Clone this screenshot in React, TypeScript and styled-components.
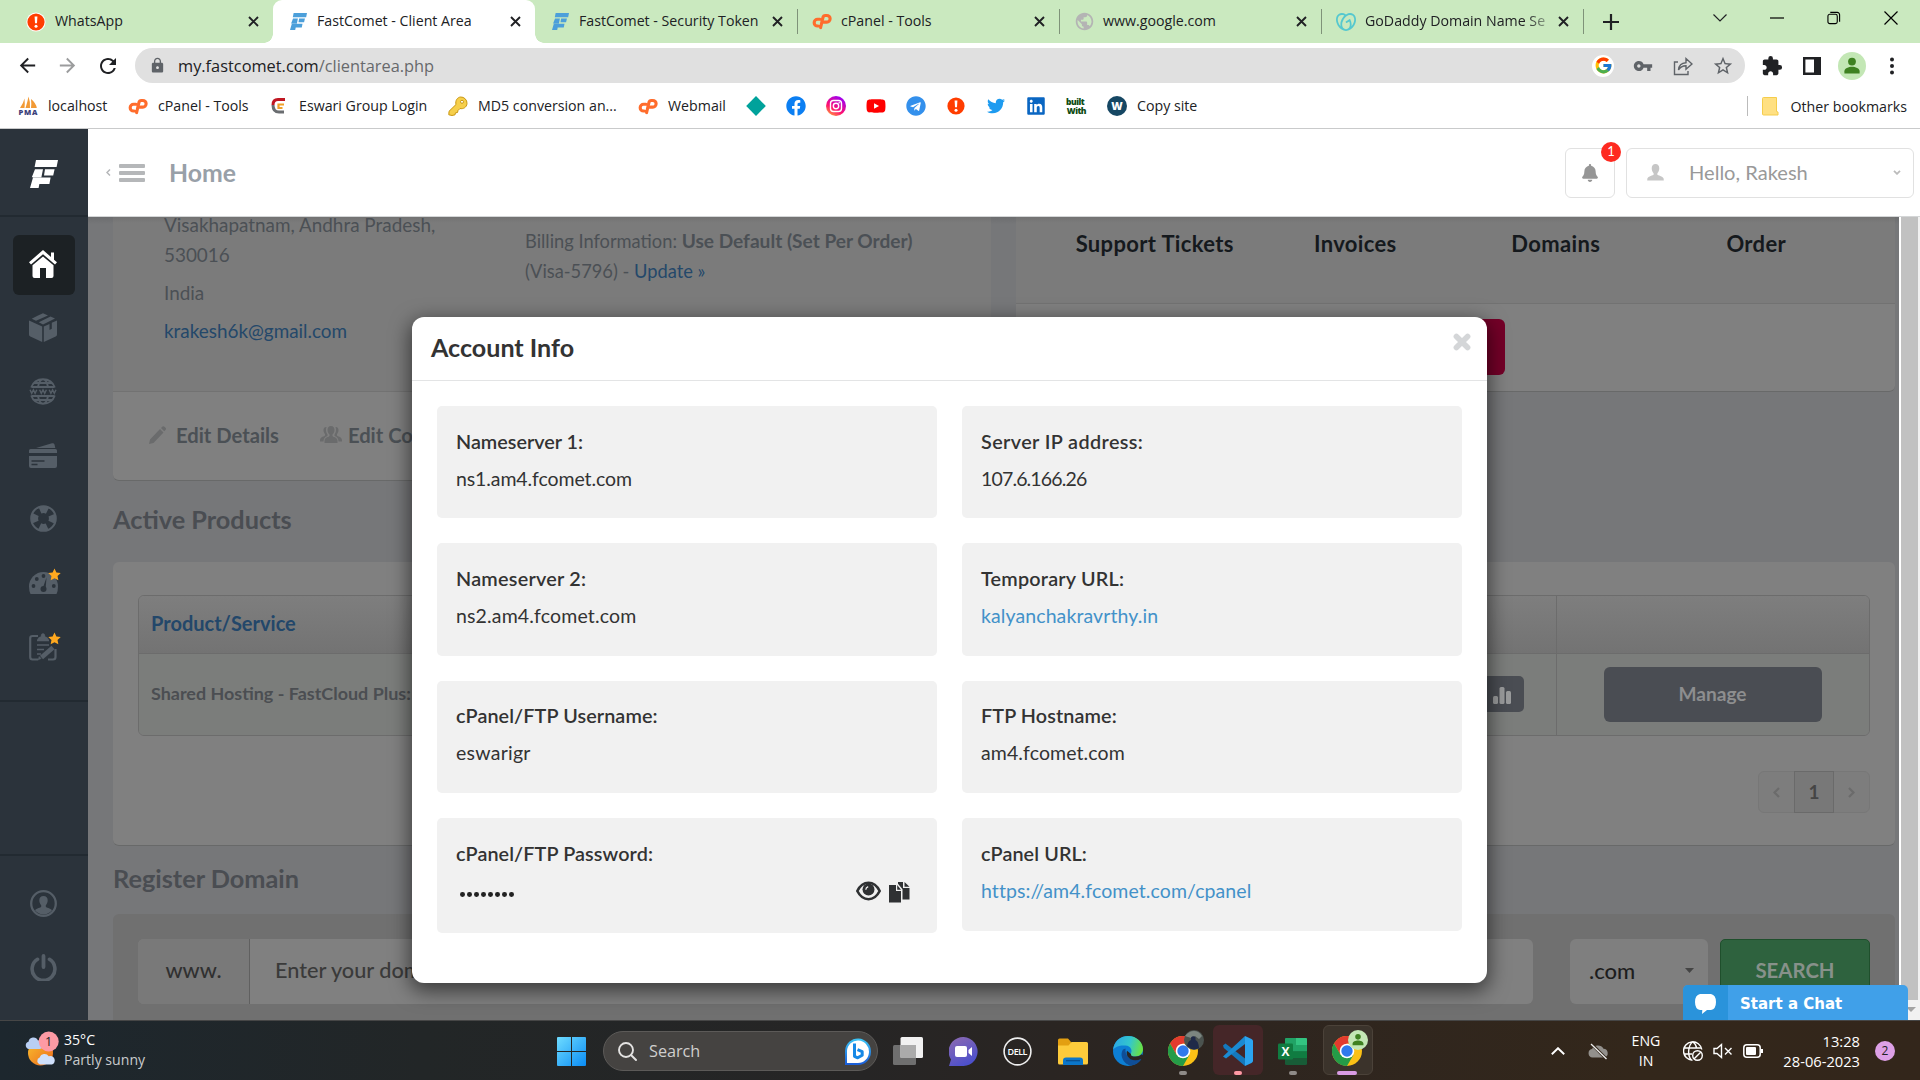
import React from "react";
import styled, { createGlobalStyle, css } from "styled-components";
import { MdArrowBack, MdArrowForward, MdRefresh, MdLock, MdVpnKey, MdStarBorder, MdExtension, MdPublic } from "react-icons/md";
import { FaBell, FaTwitter, FaLinkedin, FaYoutube, FaFacebook, FaTelegram } from "react-icons/fa";
import { FcGoogle } from "react-icons/fc";
import { SiGodaddy } from "react-icons/si";

const UI = `"Open Sans", "Noto Sans", sans-serif`;
const SITE = `Lato, "Open Sans", sans-serif`;

const Global = createGlobalStyle`
  *, *::before, *::after { box-sizing: border-box; }
  body { margin: 0; overflow: hidden; }
  p, h1, h2, h3 { margin: 0; }
  svg { display: block; flex: none; }
`;

const Screen = styled.div`
  width: 1920px;
  height: 1080px;
  overflow: hidden;
  display: flex;
  flex-direction: column;
  font-family: ${UI};
  font-size: 14.2px;
  color: #202124;
  white-space: nowrap;
`;

/* ---------- browser chrome ---------- */
const TabStrip = styled.div`
  height: 43px;
  flex: none;
  display: flex;
  align-items: center;
  padding-left: 11px;
  background: #cae9bf;
`;
const flare = css`
  content: "";
  position: absolute;
  bottom: 0;
  width: 9px;
  height: 9px;
`;
const Tab = styled.div<{ $active?: boolean; $divider?: boolean }>`
  position: relative;
  width: 262px;
  height: 43px;
  padding: 0 14px 0 15px;
  display: flex;
  align-items: center;
  border-radius: 9px 9px 0 0;
  background: ${(p) => (p.$active ? "#fff" : "transparent")};
  ${(p) =>
    p.$active &&
    css`
      &::before { ${flare} left: -9px; background: radial-gradient(circle at 0 0, transparent 8.5px, #fff 9px); }
      &::after { ${flare} right: -9px; background: radial-gradient(circle at 100% 0, transparent 8.5px, #fff 9px); }
    `}
  ${(p) =>
    p.$divider &&
    css`
      &::after { content: ""; position: absolute; right: -1px; top: 9px; width: 1px; height: 25px; background: #7f9279; }
    `}
`;
const IconSlot = styled.span`
  width: 20px;
  display: flex;
  justify-content: center;
  flex: none;
`;
const TabTitle = styled.span<{ $fade?: boolean }>`
  flex: 1;
  min-width: 0;
  margin-left: 9px;
  margin-right: 6px;
  line-height: 22px;
  padding-bottom: 2px;
  ${(p) => p.$fade && css`mask-image: linear-gradient(90deg, #000 86%, rgba(0, 0, 0, 0.3) 98%);`}
`;
const WindowButtons = styled.div`
  flex: 1;
  height: 36px;
  display: flex;
  align-items: center;
  align-self: flex-start;
  justify-content: flex-end;
  gap: 43px;
  padding-right: 22px;
`;
const NewTab = styled.div`
  width: 56px;
  display: flex;
  justify-content: center;
`;
const Toolbar = styled.div`
  height: 45px;
  flex: none;
  display: flex;
  align-items: center;
  padding: 0 8px 0 16px;
  background: #fff;
`;
const NavButtons = styled.div`
  display: flex;
  gap: 17px;
  width: 119px;
`;
const AddressBar = styled.div`
  width: 1610px;
  height: 35px;
  border-radius: 18px;
  background: #e0e0e0;
  display: flex;
  align-items: center;
  padding: 0 2px 0 14px;
`;
const Url = styled.span`
  flex: 1;
  margin-left: 12px;
  font-size: 16.35px;
  padding-top: 1px;
  span { color: #67696c; }
`;
const IconStrip = styled.div`
  display: grid;
  grid-template-columns: repeat(4, 40px);
  place-items: center;
`;
const AddressIcons = styled(IconStrip)`
  color: #5f6368;
`;
const ToolbarRight = styled(IconStrip)`
  margin-left: auto;
`;
const GoogleDisc = styled.span`
  width: 22px;
  height: 22px;
  border-radius: 50%;
  background: #fff;
  display: grid;
  place-items: center;
`;
const Bookmarks = styled.div`
  height: 41px;
  flex: none;
  display: flex;
  align-items: center;
  padding: 0 13px 4px 18px;
  background: #fff;
  border-bottom: 1px solid #c9cacb;
`;
const Bookmark = styled.div<{ $w: number }>`
  width: ${(p) => p.$w}px;
  display: flex;
  align-items: center;
  gap: 10px;
  line-height: 20px;
`;
const OtherBookmarks = styled.div`
  margin-left: auto;
  height: 20px;
  border-left: 1px solid #bbb;
  padding-left: 14px;
  display: flex;
  align-items: center;
  gap: 12px;
`;

/* ---------- site frame ---------- */
const Page = styled.div`
  position: relative;
  height: 891px;
  flex: none;
  display: flex;
  font-family: ${SITE};
`;
const Sidebar = styled.nav`
  width: 88px;
  background: #2b333b;
  color: #555e67;
  display: flex;
  flex-direction: column;
`;
const SideSection = styled.div<{ $h: number }>`
  height: ${(p) => p.$h}px;
  border-bottom: 2px solid #222a31;
  display: flex;
  flex-direction: column;
  align-items: center;
`;
const SideLogo = styled(SideSection)`
  justify-content: center;
  padding-top: 3px;
`;
const SideNav = styled(SideSection)`
  padding-top: 18px;
  gap: 3.7px;
`;
const SideUser = styled.div`
  padding-top: 18px;
  display: flex;
  flex-direction: column;
  align-items: center;
  gap: 4px;
`;
const SideItem = styled.div<{ $active?: boolean }>`
  width: 62px;
  height: 60px;
  border-radius: 6px;
  display: grid;
  place-items: center;
  position: relative;
  padding: 0 2px 2px 0;
  background: ${(p) => (p.$active ? "#1c2124" : "transparent")};
  color: ${(p) => (p.$active ? "#fff" : "inherit")};
`;
const StarBadge = styled.svg`
  position: absolute;
  left: 35px;
  top: 15px;
`;
const Main = styled.div`
  flex: 1;
  display: flex;
  flex-direction: column;
`;
const Header = styled.header`
  height: 88px;
  flex: none;
  display: flex;
  align-items: center;
  padding: 0 6px 0 18px;
  background: #fff;
  border-bottom: 1px solid #d4d6d7;
`;
const Burger = styled.div`
  width: 26px;
  margin-left: 8px;
  display: grid;
  gap: 3px;
  span { height: 4px; border-radius: 1px; background: #b5b7b9; }
`;
const PageName = styled.h1`
  margin-left: 24px;
  font-size: 24.8px;
  line-height: 30px;
  color: #98a0a8;
`;
const BellBox = styled.div`
  position: relative;
  margin-left: auto;
  width: 50px;
  height: 50px;
  border: 1px solid #e1e1e1;
  border-radius: 6px;
  display: grid;
  place-items: center;
  color: #969696;
`;
const Count = styled.span`
  position: absolute;
  right: -7px;
  top: -7px;
  width: 20px;
  height: 20px;
  border-radius: 50%;
  background: #fe2a20;
  color: #fff;
  font-size: 13px;
  line-height: 18px;
  text-align: center;
`;
const UserBox = styled.div`
  margin-left: 11px;
  width: 288px;
  height: 50px;
  border: 1px solid #e1e1e1;
  border-radius: 6px;
  display: flex;
  align-items: center;
  padding: 0 12px 0 20px;
  font-size: 20.1px;
  color: #999;
  span { margin-left: 25px; flex: 1; padding-bottom: 2px; }
`;
const Body = styled.div`
  height: 803px;
  flex: none;
  display: flex;
`;
const Content = styled.div`
  width: 1811px;
  height: 803px;
  overflow: hidden;
  padding: 0 4px 0 25px;
  background: linear-gradient(#6c6d6f, #767779 7px);
  color: #4b5055;
`;
const ScrollTrack = styled.div`
  width: 21px;
  background: #f1f1f1;
  border-left: 2px solid #fff;
  display: flex;
  flex-direction: column;
`;
const ScrollThumb = styled.div`
  width: 17px;
  height: 783px;
  background: #c1c1c1;
`;
const ScrollArrow = styled.div`
  width: 0;
  margin: 7px 0 0 5px;
  border: 5px solid transparent;
  border-top-color: #a3a3a3;
`;

/* ---------- dashboard ---------- */
const TopRow = styled.div`
  display: grid;
  grid-template-columns: 878px 879px;
  gap: 25px;
  height: 264px;
  align-items: start;
`;
const Card = styled.section<{ $h: number }>`
  height: ${(p) => p.$h}px;
  background: #808080;
  border-radius: 6px;
  border-bottom: 1px solid #686969;
  overflow: hidden;
`;
const FlatCard = styled(Card)`
  border-radius: 0 0 6px 6px;
`;
const Details = styled.div`
  height: 175px;
  overflow: hidden;
  display: grid;
  grid-template-columns: 361px 1fr;
  padding-left: 51px;
  background: linear-gradient(#727272, #7b7b7b 6px);
  border-bottom: 1px solid #727272;
  font-size: 18.9px;
  line-height: 30px;
  p { margin-bottom: 8px; }
  a { color: #24486a; }
`;
const Address = styled.div`
  margin-top: -7px;
`;
const Billing = styled.div`
  padding-top: 9px;
  font-size: 18.3px;
  b { font-size: 19.1px; }
`;
const CardActions = styled.div`
  height: 87px;
  padding: 0 0 2px 36px;
  display: flex;
  align-items: center;
  font-size: 20.2px;
  font-weight: 700;
`;
const Action = styled.div<{ $gap: number }>`
  display: flex;
  align-items: center;
  gap: ${(p) => p.$gap}px;
  margin-right: 41px;
  svg { color: #6a6b6c; }
`;
const Shortcuts = styled.div`
  height: 87px;
  display: grid;
  grid-template-columns: repeat(4, 200.5px);
  justify-content: center;
  text-align: center;
  padding-top: 12px;
  background: linear-gradient(#727272, #7b7b7b 6px);
  border-bottom: 1px solid #727272;
  font-size: 22px;
  font-weight: 700;
  letter-spacing: 0.35px;
  line-height: 30px;
  color: #15191d;
`;
const RedButton = styled.div`
  width: 200px;
  height: 56px;
  margin: 15px 0 0 289px;
  border-radius: 6px;
  background: #740028;
`;
const SectionTitle = styled.h2<{ $h: number }>`
  height: ${(p) => p.$h}px;
  line-height: ${(p) => p.$h - 4}px;
  font-size: 25.3px;
  color: #4a4d52;
`;
const ProductsCard = styled(Card)`
  padding: 33px 25px 0;
`;
const Table = styled.div`
  height: 141px;
  border: 1px solid #6c6c6c;
  border-radius: 6px;
  overflow: hidden;
`;
const TableRow = styled.div<{ $head?: boolean }>`
  height: ${(p) => (p.$head ? 58 : 81)}px;
  display: grid;
  grid-template-columns: 1418px 1fr;
  background: ${(p) => (p.$head ? "linear-gradient(#7e7e7e, #737373)" : "#7b7d7b")};
  border-bottom: ${(p) => (p.$head ? "1px solid #6c6c6c" : "0")};
  font-weight: 700;
`;
const Cell = styled.div<{ $link?: boolean }>`
  display: flex;
  align-items: center;
  justify-content: space-between;
  padding: 0 32px 3px 12px;
  border-right: 1px solid #6c6c6c;
  font-size: ${(p) => (p.$link ? 20 : 17.95)}px;
  color: ${(p) => (p.$link ? "#23476a" : "#4b4e52")};
  &:last-child { border-right: 0; padding: 0; justify-content: center; }
`;
const StatsButton = styled.div`
  width: 44px;
  height: 36px;
  margin-top: 2px;
  border-radius: 5px;
  background: #4a4d53;
  display: grid;
  place-items: center;
  padding-top: 2px;
`;
const ManageButton = styled.div`
  width: 218px;
  height: 55px;
  border-radius: 6px;
  background: #4a4d53;
  color: #8d8e8f;
  font-size: 19.1px;
  line-height: 53px;
  text-align: center;
  margin-right: 1px;
`;
const Pager = styled.div`
  margin: 35px 0 0 auto;
  width: 112px;
  height: 42px;
  border: 1px solid #777;
  border-radius: 6px;
  background: #7d7d7d;
  display: flex;
  align-items: center;
  color: #6b6b6b;
  span { flex: 1; display: grid; place-items: center; }
  b {
    width: 40px;
    height: 42px;
    border: 1px solid #6a6a6a;
    background: #787878;
    color: #454545;
    font-size: 19px;
    line-height: 40px;
    text-align: center;
  }
`;
const DomainCard = styled.section`
  height: 200px;
  border-radius: 6px;
  background: #707070;
  padding: 25px;
  display: flex;
  font-size: 22px;
  line-height: 63px;
`;
const DomainInput = styled.div`
  width: 1395px;
  height: 65px;
  border-radius: 6px;
  background: #808080;
  display: flex;
  overflow: hidden;
  color: #3a3a3a;
  font-weight: 500;
  font-size: 21.7px;
`;
const Prefix = styled.div`
  width: 112px;
  background: #797979;
  border-right: 1px solid #606060;
  text-align: center;
  color: #303030;
  margin-right: 25px;
`;
const Tld = styled.div`
  width: 138px;
  height: 65px;
  margin: 0 12px 0 37px;
  border-radius: 6px;
  background: #7f7f7f;
  color: #1d1d1d;
  font-weight: 500;
  display: flex;
  align-items: center;
  justify-content: space-between;
  padding: 0 14px 2px 19px;
`;
const SearchButton = styled.div`
  width: 150px;
  height: 65px;
  border: 1px solid #1f4f2c;
  border-radius: 5px;
  background: #2e623e;
  color: #87918a;
  font-size: 20.4px;
  line-height: 61px;
  font-weight: 700;
  text-align: center;
`;

/* ---------- modal ---------- */
const Modal = styled.div`
  position: absolute;
  left: 412px;
  top: 188px;
  width: 1075px;
  height: 666px;
  border-radius: 12px;
  background: #fff;
  box-shadow: 0 6px 20px 2px rgba(0, 0, 0, 0.55);
  color: #333;
`;
const ModalHeader = styled.div`
  height: 64px;
  border-bottom: 1px solid #e3e4e5;
  display: flex;
  justify-content: space-between;
  padding: 0 16px 0 19px;
  h3 { font-size: 25.1px; line-height: 61px; font-weight: 700; }
  svg { margin-top: 16px; }
`;
const ModalGrid = styled.div`
  padding: 25px;
  display: grid;
  grid-template-columns: 500px 500px;
  grid-auto-rows: 112.4px;
  gap: 25px;
`;
const InfoBox = styled.div<{ $h?: number }>`
  height: ${(p) => p.$h ?? 112.4}px;
  border-radius: 5px;
  background: #f1f1f1;
  padding: 15.5px 19px 0;
  line-height: 38px;
`;
const InfoLabel = styled.div<{ $track?: number }>`
  font-size: 19.8px;
  font-weight: 600;
  letter-spacing: ${(p) => p.$track ?? 0.1}px;
`;
const InfoValue = styled.div<{ $link?: boolean; $track?: number }>`
  font-size: 19.5px;
  letter-spacing: ${(p) => p.$track ?? 0.1}px;
  color: ${(p) => (p.$link ? "#4391c9" : "#333")};
`;
const PasswordRow = styled.div`
  display: flex;
  align-items: center;
  height: 38px;
  padding: 0 8px 0 4px;
  svg + svg { margin-left: 8px; margin-top: 3px; }
`;
const Dots = styled.div`
  display: flex;
  gap: 2.2px;
  margin: 7px auto 0 0;
  i { width: 4.800px; height: 4.800px; border-radius: 50%; background: #222; }
`;
const Chat = styled.div`
  position: absolute;
  left: 1683px;
  bottom: 0;
  width: 225px;
  height: 35px;
  border-radius: 5px 5px 0 0;
  background: #40a0e9;
  display: flex;
  overflow: hidden;
  color: #fff;
  font: bold 15px/38px "DejaVu Sans", sans-serif;
`;
const ChatIcon = styled.div`
  width: 45px;
  margin-right: 12px;
  padding-top: 3px;
  background: #2a93db;
  display: grid;
  place-items: center;
`;

/* ---------- taskbar ---------- */
const Taskbar = styled.footer`
  height: 60px;
  flex: none;
  border-top: 1px solid #464646;
  background: linear-gradient(90deg, #1d272e 0, #222627 22%, #262525 45%, #2d2520 62%, #33271b 85%, #33261b 100%);
  display: grid;
  grid-template-columns: 557px 818px 545px;
  align-items: center;
  color: #fff;
`;
const Weather = styled.div`
  display: flex;
  padding: 0 0 2px 25px;
  gap: 5px;
  align-items: center;
`;
const WeatherText = styled.div`
  font-size: 14.1px;
  line-height: 20px;
  padding-bottom: 1px;
  span { color: #c9cbcc; }
`;
const Apps = styled.div`
  display: flex;
  align-items: center;
  height: 60px;
`;
const SearchBox = styled.div`
  width: 275px;
  height: 40px;
  margin: 0 3px 0 17px;
  border-radius: 20px;
  border: 1px solid #5c5a58;
  background: #454341;
  display: flex;
  align-items: center;
  padding: 0 6px 0 14px;
  color: #d0cfce;
  font-size: 16.2px;
  span { flex: 1; margin-left: 12px; padding-bottom: 1px; }
`;
const AppSlot = styled.div<{ $tile?: string; $dot?: string; $wide?: boolean }>`
  position: relative;
  width: 55px;
  height: 60px;
  display: grid;
  place-items: center;
  &::before {
    content: "";
    position: absolute;
    inset: 4px 2px 6px 3px;
    border-radius: 6px;
    background: ${(p) => p.$tile ?? "transparent"};
    border: 1px solid ${(p) => (p.$wide ? "#4b4239" : "transparent")};
  }
  &::after {
    content: "";
    position: absolute;
    bottom: 6px;
    left: 50%;
    margin-left: ${(p) => (p.$wide ? -10 : -4)}px;
    width: ${(p) => (p.$wide ? 20 : 8)}px;
    height: 4px;
    border-radius: 2px;
    background: ${(p) => p.$dot ?? "transparent"};
  }
  svg { position: relative; }
`;
const Tray = styled.div`
  display: flex;
  align-items: center;
  padding-left: 168px;
`;
const TraySlot = styled.div<{ $w: number }>`
  width: ${(p) => p.$w}px;
  display: grid;
  place-items: center;
  line-height: 20px;
`;
const TrayIcons = styled.div`
  display: flex;
  gap: 10px;
  padding-left: 14px;
`;
const Clock = styled.div`
  width: 96px;
  text-align: right;
  line-height: 20px;
  font-size: 14.7px;
  padding-bottom: 1px;
`;
const Notice = styled.div`
  width: 20px;
  height: 20px;
  margin-left: 15px;
  border-radius: 50%;
  background: #dda0e6;
  color: #222;
  font-size: 12px;
  line-height: 20px;
  text-align: center;
`;

/* ---------- drawings ---------- */
const Alert = ({ s = 20 }) => (
  <svg width={s} height={s} viewBox="0 0 20 20"><circle cx="10" cy="10" r="9.6" fill="#fff" /><circle cx="10" cy="10" r="8.6" fill="#ff3d00" /><path d="M8.6 4.6h2.8l-.4 6.6H9z" fill="#fff" /><circle cx="10" cy="14.2" r="1.5" fill="#fff" /></svg>
);
const Comet = ({ s = 17, c = "#4c9fda" }) => (
  <svg width={s} height={s} viewBox="0 0 28 28" fill={c}><path d="M6 0H28L26.6 7H4.6zM5 9.2h8l-1.6 8H1.8zM15 9.2h9.6L23.2 15.4H14zM3 17.6h17.6L19.4 24H9.4L8.6 28H0z" /></svg>
);
const CPanel = () => (
  <svg width="20" height="17" viewBox="0 0 21 18" fill="none" stroke="#ff6c2c" strokeWidth="3.3" strokeLinecap="round"><path d="M8.4 6.6H5.8a3.5 3.5 0 0 0 0 7.2h.6M9 15.4 11.6 4.4Q12 2.6 14 2.6h1.6a3.5 3.5 0 0 1 0 7H13" /></svg>
);
const TabClose = () => (
  <svg width="11" height="11" viewBox="0 0 11 11" stroke="#202124" strokeWidth="1.9"><path d="M1 1l9 9M10 1l-9 9" /></svg>
);
const Person = ({ s = 18, c = "currentColor" }) => (
  <svg width={s} height={s} viewBox="0 0 18 18" fill={c}><path d="M9 0C6.4 0 5 1.8 5 4.4c0 2 .8 4.2 2 5.4v1.6c-.3.9-5.8 1.2-6.6 4L.2 17.6h17.6l-.2-2.2c-.8-2.8-6.3-3.1-6.6-4V9.8c1.2-1.200 2-3.400 2-5.400C13 1.800 11.600 0 9 0z" /></svg>
);
const Profile = ({ s = 28 }) => (
  <svg width={s} height={s} viewBox="0 0 28 28"><circle cx="14" cy="14" r="14" fill="#c3e7b5" /><circle cx="14" cy="9.600" r="3.900" fill="#3e8121" /><path d="M6.400 21.500v-2.200c0-3 4.200-4.500 7.600-4.500s7.600 1.500 7.600 4.500v2.200z" fill="#3e8121" /></svg>
);
const Star = () => (
  <StarBadge width="13" height="13" viewBox="0 0 24 24"><path d="M12 .8l3.500 7.400 8 1-5.900 5.600 1.500 8L12 18.900l-7.100 3.900 1.500-8L.5 9.200l8-1z" fill="#ffa91f" /></StarBadge>
);
const Chrome = () => (
  <svg width="30" height="30" viewBox="0 0 30 30"><circle cx="15" cy="15" r="15" fill="#fbc116" /><path d="M2 7.500A15 15 0 0 1 28 7.500H15L8.500 18.800z" fill="#e33b2e" /><path d="M2 7.500A15 15 0 0 0 15 30l6.500-11.300H8.500z" fill="#259c48" /><circle cx="15" cy="15" r="7.300" fill="#fff" /><circle cx="15" cy="15" r="5.700" fill="#2f79ec" /></svg>
);
const ChromeWrap = styled.div`
  position: relative;
  display: grid;
`;
const Overlap = styled.div`
  position: absolute;
  right: -6px;
  top: -6px;
`;

const sideIcons: { key: string; star?: boolean; icon: React.ReactNode }[] = [
  { key: "box", icon: <svg width="28" height="29" viewBox="0 0 28 29" fill="currentColor"><path d="M8.500 2.800 14 .3l5 2.100-12 5.300-4.300-2zM21.500 3.500 26 5.600 14 11.400 9.800 9.200zM0 7.500l13.200 6V29L1.300 23.500Q0 23 0 21.500zM28 7.500v14q0 1.500-1.300 2L14.800 29V13.500l5.700-2.600v6l2.300-1.200V9.800z" /></svg> },
  { key: "domains", icon: <svg width="28" height="27" viewBox="0 0 28 27" fill="none" stroke="currentColor" strokeWidth="1.900"><path d="M2.200 9.500C4 4.500 8.500 1.200 14 1.200s10 3.300 11.800 8.300M2.200 17.500c1.800 5 6.300 8.300 11.800 8.300s10-3.300 11.800-8.300M2.500 9h23M2.500 18h23M5 5h18M5 22h18M9 9c.8-4.500 2.500-7.800 5-7.800s4.200 3.300 5 7.800M9 18c.8 4.500 2.500 7.800 5 7.800s4.200-3.300 5-7.800" /><path d="M1 11.800l1.700 3.500 1.700-3.500 1.700 3.500 1.700-3.500M10.600 11.800l1.700 3.500 1.700-3.500 1.700 3.500 1.700-3.500M20.200 11.800l1.700 3.500 1.700-3.500 1.700 3.500 1.700-3.500" strokeWidth="1.400" /></svg> },
  { key: "billing", icon: <svg width="28" height="25" viewBox="0 0 28 25" fill="currentColor"><path d="M7 5 23 .3q2-.5 2.500 1.200L26.300 5zM1.500 6h25Q28 6 28 7.500V10H0V7.500Q0 6 1.500 6zM0 13h28v10q0 2-2 2H2q-2 0-2-2z" /><path d="M2.500 18h13M2.500 21.500h6" stroke="#2b333b" strokeWidth="1.600" /></svg> },
  { key: "support", icon: <svg width="27" height="27" viewBox="0 0 27 27" fill="none" stroke="currentColor"><circle cx="13.500" cy="13.500" r="12.300" strokeWidth="2" /><circle cx="13.500" cy="13.500" r="8.900" strokeWidth="7" strokeDasharray="7.800 6.180" strokeDashoffset="3.900" /></svg> },
  { key: "speed", star: true, icon: <svg width="29" height="23" viewBox="0 0 29 23" fill="currentColor"><path d="M1.500 23Q0 20 0 15.500A14.500 14.500 0 0 1 29 15.500q0 4.500-1.500 7.500z" /><g fill="#2b333b"><circle cx="4.500" cy="15" r="1.900" /><circle cx="7.800" cy="8" r="1.900" /><circle cx="14.500" cy="5" r="1.900" /><circle cx="24.800" cy="15" r="1.900" /><circle cx="14.500" cy="18" r="3" /><path d="M13.800 17 17.500 6.500 16.500 19z" /></g></svg> },
  { key: "tasks", star: true, icon: <svg width="28" height="29" viewBox="0 0 28 29" fill="none" stroke="currentColor" strokeWidth="2.200"><path d="M9 4H3.500Q1.200 4 1.200 6.300V25q0 2.500 2.300 2.500H9M26.500 17v8q0 2.500-2.500 2.500H19" /><path d="M8 8.500h12M8 13h12M8 17.500h7M8 22h4" strokeWidth="1.500" /><path d="M8.500 8h11q-.5-3-3.500-3.200Q16 1.500 14 1.500T12 4.800Q9 5 8.500 8z" fill="currentColor" strokeWidth="0.500" /><path d="M12.500 25.500 24 15.500" strokeWidth="4.600" /><path d="M9 28l1.200-3.500 2 2z" fill="currentColor" strokeWidth="0.500" /></svg> },
];

const tabs: { t: string; i: React.ReactNode; active?: boolean; divider?: boolean; fade?: boolean }[] = [
  { t: "WhatsApp", i: <Alert /> },
  { t: "FastComet - Client Area", i: <Comet />, active: true },
  { t: "FastComet - Security Token", i: <Comet />, divider: true },
  { t: "cPanel - Tools", i: <CPanel />, divider: true },
  { t: "www.google.com", i: <MdPublic size={21} color="#b4b4b4" />, divider: true },
  { t: "GoDaddy Domain Name Se", i: <SiGodaddy size={20} color="#55c8cf" />, divider: true, fade: true },
];

const Pma = () => (
  <svg width="20" height="20" viewBox="0 0 20 20" overflow="visible"><path d="M2 12Q5.500 7 6.500 2.500 7 8 6.500 12zM7.500 12Q9.500 6 10.500.5 12.500 6 12 12zM13 12q.6-4 0-9 5 4 5.800 9z" fill="#f29a35" /><text x="0.500" y="19" fontFamily="Open Sans, sans-serif" fontWeight="800" fontSize="7.500" textLength="19" fill="#3c3f7a">PMA</text></svg>
);
const Eswari = () => (
  <svg width="17" height="18" viewBox="0 0 17 18" fill="none" strokeWidth="3"><path d="M14 2.500H7Q2 2.500 2 8" stroke="#c01722" /><path d="M2 8q0 7 6 7h5" stroke="#6a6d70" /><path d="M13 7.500H7.500v3.500h4" stroke="#f0a029" strokeWidth="2.200" /></svg>
);
const GoldKey = () => (
  <svg width="20" height="20" viewBox="0 0 20 20" fill="#f6cf4b" stroke="#c99712"><path d="M12.500 1a6.200 6.200 0 0 1 6.500 6.500c-.3 4-4 5.800-7 5L10 14.500l-.5 2-2 .3-.5 2-3 .7-3.200-.7.2-3.500L8 8.500C7 4.500 9.500 1.300 12.500 1z" /><circle cx="14" cy="5.800" r="1.500" fill="#fff" /></svg>
);
const Insta = () => (
  <svg width="20" height="20" viewBox="0 0 20 20"><defs><linearGradient id="ig" x1="0" y1="1" x2=".6" y2="0"><stop offset="0" stopColor="#ffc22e" /><stop offset=".45" stopColor="#ff0f6f" /><stop offset="1" stopColor="#a100ef" /></linearGradient></defs><circle cx="10" cy="10" r="10" fill="url(#ig)" /><g fill="none" stroke="#fff" strokeWidth="1.400"><rect x="4.500" y="4.500" width="11" height="11" rx="3" /><circle cx="10" cy="10" r="2.700" /></g><circle cx="13.200" cy="6.800" r=".8" fill="#fff" /></svg>
);
const BuiltBadge = styled.span`
  width: 20px;
  display: flex;
  flex-direction: column;
  font-size: 8.5px;
  font-weight: 800;
  line-height: 9px;
  letter-spacing: -0.5px;
  color: #0c4a12;
  b { font-weight: 800; }
  b + b { align-self: flex-end; }
`;
const WDisc = () => (
  <svg width="20" height="20" viewBox="0 0 20 20"><circle cx="10" cy="10" r="10" fill="#164763" /><text x="10" y="14" textAnchor="middle" fontFamily="Open Sans, sans-serif" fontWeight="800" fontSize="11" fill="#fff">W</text></svg>
);
const bookmarks: { i: React.ReactNode; t?: string; w: number }[] = [
  { i: <Pma />, t: "localhost", w: 110 },
  { i: <CPanel />, t: "cPanel - Tools", w: 141 },
  { i: <Eswari />, t: "Eswari Group Login", w: 179 },
  { i: <GoldKey />, t: "MD5 conversion an...", w: 190 },
  { i: <CPanel />, t: "Webmail", w: 108 },
  { i: <svg width="20" height="20" viewBox="0 0 20 20"><path d="M10 0l9.800 10L10 20 .2 10z" fill="#00a29b" /></svg>, w: 40 },
  { i: <FaFacebook size={20} color="#0c7ff2" />, w: 40 },
  { i: <Insta />, w: 40 },
  { i: <FaYoutube size={20} color="#f00" />, w: 40 },
  { i: <FaTelegram size={20} color="#3390ec" />, w: 40 },
  { i: <Alert />, w: 40 },
  { i: <FaTwitter size={18} color="#1d9bf0" />, w: 40 },
  { i: <FaLinkedin size={20} color="#0a66c2" />, w: 40 },
  { i: <BuiltBadge><b>built</b><b>With</b></BuiltBadge>, w: 41 },
  { i: <WDisc />, t: "Copy site", w: 120 },
];

const info: { label: string; value: string; link?: boolean; lt?: number; vt?: number }[] = [
  { label: "Nameserver 1:", value: "ns1.am4.fcomet.com", lt: 0, vt: -0.1 },
  { label: "Server IP address:", value: "107.6.166.26", lt: 0.4, vt: -0.85 },
  { label: "Nameserver 2:", value: "ns2.am4.fcomet.com", lt: 0.25, vt: 0.15 },
  { label: "Temporary URL:", value: "kalyanchakravrthy.in", link: true, lt: 0.2 },
  { label: "cPanel/FTP Username:", value: "eswarigr", vt: 0.25 },
  { label: "FTP Hostname:", value: "am4.fcomet.com" },
];

export default function App() {
  return (
    <Screen>
      <Global />
      <TabStrip>
        {tabs.map((t) => (
          <Tab key={t.t} $active={t.active} $divider={t.divider}>
            <IconSlot>{t.i}</IconSlot>
            <TabTitle $fade={t.fade}>{t.t}</TabTitle>
            <TabClose />
          </Tab>
        ))}
        <NewTab><svg width="16" height="16" viewBox="0 0 16 16" stroke="#202124" strokeWidth="2.200"><path d="M8 0v16M0 8h16" /></svg></NewTab>
        <WindowButtons>
          <svg width="14" height="8" viewBox="0 0 14 8" fill="none" stroke="#202124" strokeWidth="1.200"><path d="M.5.5 7 7 13.500.5" /></svg>
          <svg width="14" height="2" viewBox="0 0 14 2"><path d="M0 1h14" stroke="#000" strokeWidth="1.200" /></svg>
          <svg width="14" height="14" viewBox="0 0 15 14" fill="none" stroke="#000" strokeWidth="1.200"><rect x="1" y="3" width="10" height="10" rx="2" /><path d="M3.500 1h7.500a2.500 2.500 0 0 1 2.500 2.500V11" /></svg>
          <svg width="14" height="14" viewBox="0 0 14 14" stroke="#000" strokeWidth="1.200"><path d="M.5.5l13 13M13.500.5l-13 13" /></svg>
        </WindowButtons>
      </TabStrip>

      <Toolbar>
        <NavButtons>
          <MdArrowBack size={23} />
          <MdArrowForward size={23} color="#9b9c9d" />
          <MdRefresh size={24} />
        </NavButtons>
        <AddressBar>
          <MdLock size={17} color="#5f6368" />
          <Url>my.fastcomet.com<span>/clientarea.php</span></Url>
          <AddressIcons>
            <GoogleDisc><FcGoogle size={19} /></GoogleDisc>
            <MdVpnKey size={20} />
            <svg width="20" height="20" viewBox="0 0 20 20" fill="none" stroke="currentColor" strokeWidth="1.400"><path d="M5 6H1.500v12.500h13.500V15M5.500 14c.3-4.500 3-7 7.500-7.300V2.500L19 8l-6 5.300V9.800c-3.500 0-5.800 1.200-7.500 4.200z" /></svg>
            <MdStarBorder size={22} />
          </AddressIcons>
        </AddressBar>
        <ToolbarRight>
          <MdExtension size={22} />
          <svg width="18" height="18" viewBox="0 0 18 18"><path d="M1.200 1.200h15.600v15.600H1.200z" fill="none" stroke="#202124" strokeWidth="2.400" /><path d="M11 0h7v18h-7z" fill="#202124" /></svg>
          <Profile />
          <svg width="18" height="18" viewBox="0 0 18 18" fill="#202124"><circle cx="9" cy="2.500" r="2" /><circle cx="9" cy="9" r="2" /><circle cx="9" cy="15.500" r="2" /></svg>
        </ToolbarRight>
      </Toolbar>

      <Bookmarks>
        {bookmarks.map((b, k) => (
          <Bookmark key={k} $w={b.w}><IconSlot>{b.i}</IconSlot>{b.t}</Bookmark>
        ))}
        <OtherBookmarks>
          <svg width="17" height="19" viewBox="0 0 17 19"><path d="M1.500.5h13v14l1.500.5v3H1.500q-1 0-1-1v-15.500q0-1 1-1z" fill="#ffe082" stroke="#f5cd4c" /></svg>
          Other bookmarks
        </OtherBookmarks>
      </Bookmarks>

      <Page>
        <Sidebar>
          <SideLogo $h={88}><Comet s={28} c="#fff" /></SideLogo>
          <SideNav $h={485}>
            <SideItem $active>
              <svg width="28" height="28" viewBox="0 0 28 28" fill="currentColor"><path d="M14 0 0 12.300 2 14.500 14 4.200l12 10.300 2-2.200-3-2.600V2.500h-3V7zM14 6.500 3.500 15.300V26q0 2 2 2H11V18h6v10h5.500q2 0 2-2V15.300z" /></svg>
            </SideItem>
            {sideIcons.map((s) => (
              <SideItem key={s.key}>{s.icon}{s.star && <Star />}</SideItem>
            ))}
          </SideNav>
          <SideSection $h={154} />
          <SideUser>
            <SideItem>
              <svg width="27" height="27" viewBox="0 0 27 27"><circle cx="13.500" cy="13.500" r="12.300" fill="none" stroke="currentColor" strokeWidth="2.300" /><path d="M13.500 6c-2.800 0-4.200 1.800-4.200 4.300 0 2 .8 3.800 1.900 4.900v1.600c-.3 1-4.700 1.300-6.200 3.500 2 2.700 5 4.200 8.500 4.200s6.500-1.500 8.500-4.200c-1.500-2.200-5.900-2.500-6.200-3.500v-1.600c1.100-1.100 1.900-2.900 1.900-4.900C17.700 7.800 16.300 6 13.500 6z" fill="currentColor" /></svg>
            </SideItem>
            <SideItem>
              <svg width="27" height="27" viewBox="0 0 27 27" fill="none" stroke="currentColor" strokeLinecap="round"><path d="M7.500 5.300a11.400 11.400 0 1 0 12 0" strokeWidth="3.600" /><path d="M13.500 2v11" strokeWidth="3.800" /></svg>
            </SideItem>
          </SideUser>
        </Sidebar>

        <Main>
          <Header>
            <svg width="5" height="7" viewBox="0 0 5 7" fill="none" stroke="#b5b7b9" strokeWidth="1.500"><path d="M4 .5 1 3.500l3 3" /></svg>
            <Burger><span /><span /><span /></Burger>
            <PageName>Home</PageName>
            <BellBox><FaBell size={18} /><Count>1</Count></BellBox>
            <UserBox>
              <Person s={17} c="#c6c6c6" />
              <span>Hello, Rakesh</span>
              <svg width="8" height="5" viewBox="0 0 8 5"><path d="M1 .8 4 3.800l3-3" stroke="#bbb" strokeWidth="1.800" fill="none" /></svg>
            </UserBox>
          </Header>

          <Body>
            <Content>
              <TopRow>
                <FlatCard $h={264}>
                  <Details>
                    <Address>
                      <p>Visakhapatnam, Andhra Pradesh,<br />530016</p>
                      <p>India</p>
                      <p><a>krakesh6k@gmail.com</a></p>
                    </Address>
                    <Billing>Billing Information: <b>Use Default (Set Per Order)</b><br />(Visa-5796) - <a>Update »</a></Billing>
                  </Details>
                  <CardActions>
                    <Action $gap={10}>
                      <svg width="17" height="18" viewBox="0 0 17 18" fill="currentColor"><path d="M0 18l1-4.500L11 3l3.500 3.500L4.500 17zM12 2l1.500-1.500q1-.8 2 .2l1 1q1 1 .2 2L15.200 5.300z" /></svg>
                      Edit Details
                    </Action>
                    <Action $gap={6}>
                      <svg width="22" height="17" viewBox="0 0 22 17" fill="currentColor"><path d="M11 0C8.500 0 7.500 1.800 7.500 4c0 2 1 3.800 2 4.600V10c-.5 1-4.500 1-5 4.500V17h13v-2.500c-.5-3.500-4.500-3.500-5-4.500V8.600c1-.8 2-2.600 2-4.600 0-2.200-1-4-3.500-4zM6.500 1C4.500.8 3.300 2.300 3.500 4.500c.1 1.700.8 2.800 1.500 3.500v1.500C4.500 10.500.5 10.500 0 14v1.500h3.500c0-3 1.500-4.500 4-5.500V8.500C6 6.500 5.500 3.500 6.500 1zM15.500 1c2-.2 3.200 1.300 3 3.500-.1 1.700-.8 2.800-1.500 3.500v1.500c.5 1 4.500 1 5 4.500v1.500h-3.500c0-3-1.500-4.500-4-5.500V8.500c1.500-2 2-5 1-7.500z" /></svg>
                      Edit Contacts
                    </Action>
                  </CardActions>
                </FlatCard>
                <FlatCard $h={175}>
                  <Shortcuts><span>Support Tickets</span><span>Invoices</span><span>Domains</span><span>Order</span></Shortcuts>
                  <RedButton />
                </FlatCard>
              </TopRow>

              <SectionTitle $h={81}>Active Products</SectionTitle>
              <ProductsCard $h={284}>
                <Table>
                  <TableRow $head><Cell $link>Product/Service</Cell><Cell /></TableRow>
                  <TableRow>
                    <Cell>
                      Shared Hosting - FastCloud Plus:
                      <StatsButton><svg width="18" height="17" viewBox="0 0 18 17" fill="#9a9b9c"><rect y="9" width="5" height="8" rx="1.500" /><rect x="6.500" width="5" height="17" rx="1.500" /><rect x="13" y="4" width="5" height="13" rx="1.500" /></svg></StatsButton>
                    </Cell>
                    <Cell><ManageButton>Manage</ManageButton></Cell>
                  </TableRow>
                </Table>
                <Pager>
                  <span><svg width="7" height="11" viewBox="0 0 7 11" fill="none" stroke="currentColor" strokeWidth="2.200"><path d="M6 1 1.500 5.500 6 10" /></svg></span>
                  <b>1</b>
                  <span><svg width="7" height="11" viewBox="0 0 7 11" fill="none" stroke="currentColor" strokeWidth="2.200"><path d="M1 1l4.500 4.500L1 10" /></svg></span>
                </Pager>
              </ProductsCard>

              <SectionTitle $h={68}>Register Domain</SectionTitle>
              <DomainCard>
                <DomainInput><Prefix>www.</Prefix>Enter your domain name here</DomainInput>
                <Tld>.com<svg width="9" height="5" viewBox="0 0 9 5"><path d="M0 0h9L4.500 5z" fill="#444" /></svg></Tld>
                <SearchButton>SEARCH</SearchButton>
              </DomainCard>
            </Content>
            <ScrollTrack><ScrollThumb /><ScrollArrow /></ScrollTrack>
          </Body>
        </Main>

        <Modal>
          <ModalHeader>
            <h3>Account Info</h3>
            <svg width="18" height="18" viewBox="0 0 18 18" stroke="#d4d6d8" strokeWidth="5.600" strokeLinecap="round"><path d="M3.400 3.400l11.200 11.200M14.600 3.400 3.400 14.600" /></svg>
          </ModalHeader>
          <ModalGrid>
            {info.map((x) => (
              <InfoBox key={x.label}>
                <InfoLabel $track={x.lt}>{x.label}</InfoLabel>
                <InfoValue $link={x.link} $track={x.vt}>{x.value}</InfoValue>
              </InfoBox>
            ))}
            <InfoBox $h={115}>
              <InfoLabel>cPanel/FTP Password:</InfoLabel>
              <PasswordRow>
                <Dots>{Array.from({ length: 8 }, (_, k) => <i key={k} />)}</Dots>
                <svg width="25" height="20" viewBox="0 0 25 19"><path d="M1.300 9.500Q5.500 1.300 12.500 1.300T23.700 9.500q-4.200 8.200-11.200 8.200T1.300 9.500z" fill="none" stroke="#2f3133" strokeWidth="2.600" /><circle cx="12.500" cy="8" r="6" fill="#2f3133" /><path d="M9.800 8.300q0-2.300 2.400-3.200" fill="none" stroke="#f1f1f1" strokeWidth="1.300" /></svg>
                <svg width="21" height="21" viewBox="0 0 21 21" fill="#2f3133"><path d="M0 3h7v6h5v11.500H0zM8.200 3 12 7.800H8.200zM9 0h5v6h6.500v11.500H13.500V7.200L9 1.800zM15.500 0 20.500 4.800H15.500z" /></svg>
              </PasswordRow>
            </InfoBox>
            <InfoBox $h={113}>
              <InfoLabel>cPanel URL:</InfoLabel>
              <InfoValue $link>https://am4.fcomet.com/cpanel</InfoValue>
            </InfoBox>
          </ModalGrid>
        </Modal>

        <Chat>
          <ChatIcon><svg width="21" height="20" viewBox="0 0 21 20" fill="#fff"><path d="M5 0h11q5 1 5 8t-5 8h-4l-5 4 .3-4H5Q0 15 0 8t5-8z" /></svg></ChatIcon>
          Start a Chat
        </Chat>
      </Page>

      <Taskbar>
        <Weather>
          <svg width="34" height="38" viewBox="0 0 34 38"><defs><linearGradient id="sun" x1="0" y1="0" x2="1" y2="1"><stop offset="0" stopColor="#f8bf2e" /><stop offset="1" stopColor="#ee6a1c" /></linearGradient></defs><circle cx="15.500" cy="22" r="12.500" fill="url(#sun)" /><path d="M3.500 18a3.800 3.800 0 0 1 0-7.300 5 5 0 0 1 9.500-1.200A4.300 4.300 0 0 1 15 18z" fill="#b9cff3" /><path d="M15 33.500a3.600 3.600 0 0 1-.3-6.900 5 5 0 0 1 9-1.300 4.300 4.300 0 0 1 3.300 8.200z" fill="#cfe0fb" /><circle cx="23.700" cy="10.500" r="10" fill="#fd9aa4" /><text x="23.700" y="15" textAnchor="middle" fontFamily="Open Sans, sans-serif" fontSize="12.500" fill="#222">1</text></svg>
          <WeatherText>35°C<br /><span>Partly sunny</span></WeatherText>
        </Weather>
        <Apps>
          <svg width="29" height="29" viewBox="0 0 29 29"><defs><linearGradient id="win" x1="0" y1="0" x2="1" y2="1"><stop offset="0" stopColor="#6fdcff" /><stop offset="1" stopColor="#0a8cf5" /></linearGradient></defs><path d="M1 0h13v14H0V1q0-1 1-1zM15 0h13q1 0 1 1v13H15zM0 15h14v14H1q-1 0-1-1zM15 15h14v13q0 1-1 1H15z" fill="url(#win)" /></svg>
          <SearchBox>
            <svg width="19" height="19" viewBox="0 0 19 19" fill="none" stroke="#e4e3e2" strokeWidth="1.900" strokeLinecap="round"><circle cx="8" cy="8" r="7" /><path d="M13 13l5 5" /></svg>
            <span>Search</span>
            <svg width="26" height="27" viewBox="0 0 26 27"><defs><linearGradient id="bg" x1="0" y1="0" x2="0" y2="1"><stop offset="0" stopColor="#3cc3f5" /><stop offset="1" stopColor="#1a5ed8" /></linearGradient></defs><path d="M1 26V13A12 12.300 0 1 1 13 26z" fill="#fff" stroke="url(#bg)" strokeWidth="2" /><path d="M9.500 5.500v12.800l3.200 1.500 4.500-2.600v-3.500l-4.700-2" fill="none" stroke="#1688e6" strokeWidth="3" strokeLinejoin="round" /></svg>
          </SearchBox>
          <AppSlot><svg width="30" height="28" viewBox="0 0 30 28"><rect y="8" width="23" height="20" rx="1.500" fill="#6f6f6f" /><rect x="7.500" width="22.500" height="21" rx="1.500" fill="#f1f1f1" /><path d="M7.500 8H23v13H7.500z" fill="#ababab" /></svg></AppSlot>
          <AppSlot><svg width="29" height="29" viewBox="0 0 29 29"><defs><linearGradient id="tm" x1="0" y1="0" x2=".5" y2="1"><stop offset="0" stopColor="#8f6bb0" /><stop offset="1" stopColor="#4d50cc" /></linearGradient></defs><path d="M0 29l2-6.500A14.500 14.500 0 1 1 14.500 29z" fill="url(#tm)" /><rect x="6" y="9" width="12" height="11" rx="2" fill="#fff" /><path d="M19.500 13 23 10v9l-3.500-3z" fill="#fff" /></svg></AppSlot>
          <AppSlot><svg width="29" height="29" viewBox="0 0 29 29"><circle cx="14.500" cy="14.500" r="13.400" fill="none" stroke="#eee" strokeWidth="1.600" /><text x="14.500" y="17.800" textAnchor="middle" fontFamily="Open Sans, sans-serif" fontWeight="600" fontSize="9" textLength="20" fill="#fff">DELL</text></svg></AppSlot>
          <AppSlot><svg width="30" height="27" viewBox="0 0 30 27"><path d="M0 2q0-1.500 1.500-1.500H10L13 4v6H0z" fill="#e39f11" /><path d="M0 7.500h10.500L13.500 4H28.500Q30 4 30 5.500V25q0 1.500-1.500 1.500h-27Q0 26.500 0 25z" fill="#fdcb3b" /><path d="M5 27v-4.500q0-3 3-3h14q3 0 3 3V27z" fill="#0b76c9" /><path d="M8 22.700h14" stroke="#0a4d8c" strokeWidth="1.200" /></svg></AppSlot>
          <AppSlot><svg width="30" height="30" viewBox="0 0 30 30"><defs><linearGradient id="ed" x1="0" y1=".3" x2="1" y2=".5"><stop offset="0" stopColor="#2aa7e6" /><stop offset=".55" stopColor="#34c7cc" /><stop offset="1" stopColor="#6be33f" /></linearGradient></defs><circle cx="15" cy="15" r="15" fill="#0d7fd4" /><path d="M0 14C1 5.500 7 0 15 0c9 0 15 6.500 15 13 0 5-4 7.500-7.500 7.500-4 0-5.500-1.200-5-2.500 2.500-3.500.5-8-5-8.500C6.500 9 1.500 11 0 14z" fill="url(#ed)" /><path d="M10 13.500C6 19.500 11 29 18.500 29.500 24 28.500 27.500 25.500 28.500 22.500 21 26 11.500 22.500 12.500 12.500z" fill="#0f4e97" /><path d="M18 18q-.5 2.700 4.500 2.600 4 0 6.200-2.400l3 3-3.200 1.500q-6 3-11 .5-5-3-3.500-8.500z" fill="#2a2521" /></svg></AppSlot>
          <AppSlot $dot="#8f8b88"><ChromeWrap><Chrome /><Overlap><svg width="20" height="20" viewBox="0 0 20 20"><circle cx="10" cy="10" r="10" fill="#4b534f" /><path d="M1 6q4-5 9-5t8 5l-3 3-4-3-4 2z" fill="#7c8680" /><path d="M3 16q1-5 4-6V7.500q2-2.500 4.500 0V10q3 1 3.500 8-6 3.500-12-2z" fill="#1f2a48" /></svg></Overlap></ChromeWrap></AppSlot>
          <AppSlot $tile="#452628" $dot="#ff99a4"><svg width="30" height="30" viewBox="0 0 30 30"><path d="M0 9.500 2.500 7.500 22 22.500V30L.8 12z" fill="#1478bd" /><path d="M0 20.500 22 0v8L3 22.500z" fill="#1b8ad2" /><path d="M22 0l6.500 3Q30 3.800 30 5v20q0 1.200-1.500 2L22 30z" fill="#2ba4f0" /></svg></AppSlot>
          <AppSlot $dot="#8f8b88"><svg width="29" height="27" viewBox="0 0 29 27"><rect x="7" width="22" height="27" rx="1.500" fill="#185c37" /><path d="M7 1q0-1 1-1h10v13.500H7z" fill="#21a366" /><path d="M18 0h10q1 0 1 1v6H18z" fill="#33c481" /><path d="M18 7h11v6.500H18z" fill="#21a366" /><path d="M7 13.500h11V20H7zM18 13.500h11V20H18z" fill="#107c41" /><rect y="5.500" width="15" height="16" rx="1.200" fill="#107c41" /><text x="7.500" y="17.800" textAnchor="middle" fontFamily="Open Sans, sans-serif" fontWeight="700" fontSize="12" fill="#fff">X</text></svg></AppSlot>
          <AppSlot $tile="#3b332b" $dot="#d99be4" $wide><ChromeWrap><Chrome /><Overlap><Profile s={20} /></Overlap></ChromeWrap></AppSlot>
        </Apps>
        <Tray>
          <TraySlot $w={30}><svg width="14" height="8" viewBox="0 0 14 8" fill="none" stroke="#fff" strokeWidth="1.900"><path d="M.8 7.200 7 1.200l6.200 6" /></svg></TraySlot>
          <TraySlot $w={50}><svg width="21" height="17" viewBox="0 0 21 17"><path d="M4.500 14.500a4.300 4.300 0 0 1-.5-8.500 6.500 6.500 0 0 1 11.500-.3 4.500 4.500 0 0 1 1 8.800z" fill="#93908c" /><path d="M3 .5 18.500 16" stroke="#33271b" strokeWidth="3" /><path d="M3 1 18.500 16" stroke="#eee" strokeWidth="1.300" /></svg></TraySlot>
          <TraySlot $w={46}><span>ENG</span><span>IN</span></TraySlot>
          <TrayIcons>
            <svg width="20" height="20" viewBox="0 0 20 20" fill="none" stroke="#fff" strokeWidth="1.400"><path d="M18.800 8.500A9.200 9.200 0 1 0 9.500 19.200M1 7h17.500M1 13h8M9.800.8C4.500 5 4.500 15 8.500 19M9.800.8q3.500 2.700 3.900 7" /><circle cx="14.500" cy="14.500" r="4.800" /><path d="M11.200 17.800l6.500-6.500" /></svg>
            <svg width="20" height="20" viewBox="0 0 20 20" fill="none" stroke="#fff" strokeWidth="1.400"><path d="M1 7.500h3l4.500-4v13l-4.500-4H1zM12 7l6.500 6.500M18.500 7 12 13.500" /></svg>
            <svg width="21" height="20" viewBox="0 0 21 20"><rect x=".8" y="3.800" width="16.400" height="12.400" rx="3" fill="none" stroke="#fff" strokeWidth="1.500" /><rect x="3" y="6" width="10" height="8" rx="1" fill="#fff" /><path d="M19 8v4" stroke="#fff" strokeWidth="2" /></svg>
          </TrayIcons>
          <Clock>13:28<br />28-06-2023</Clock>
          <Notice>2</Notice>
        </Tray>
      </Taskbar>
    </Screen>
  );
}
